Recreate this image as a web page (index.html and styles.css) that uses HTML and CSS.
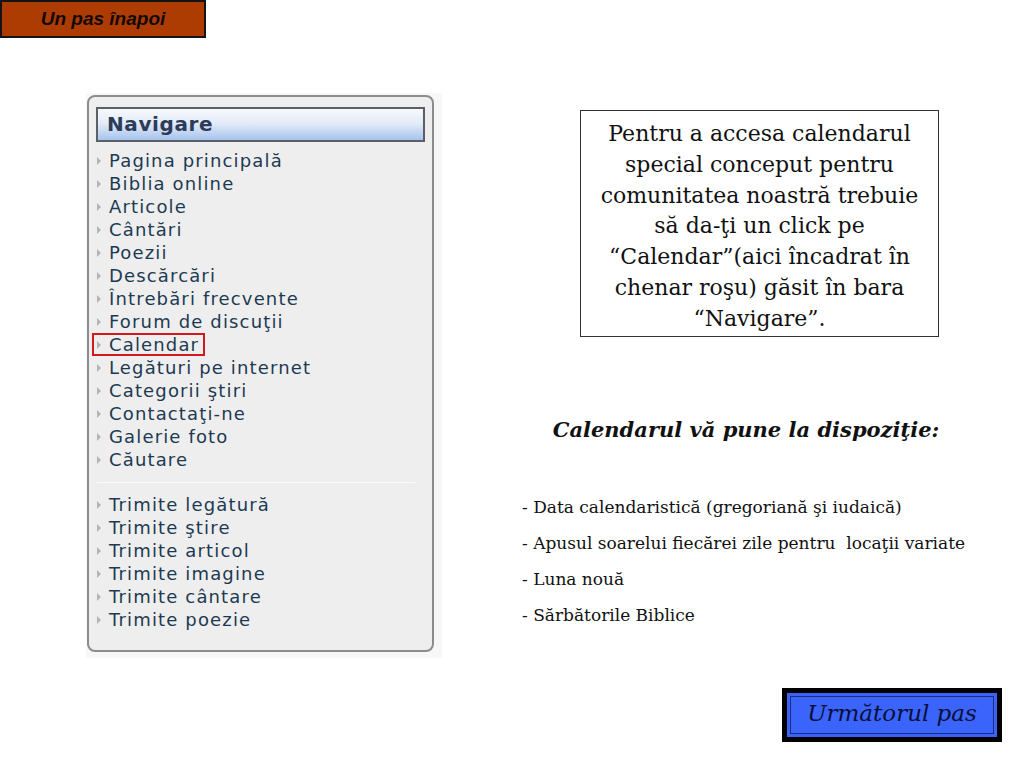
FILE: index.html
```html
<!DOCTYPE html>
<html lang="ro">
<head>
  <meta charset="utf-8">
  <title>Calendar</title>
  <link rel="stylesheet" href="styles.css">
</head>
<body>
  <div class="slide">
    <a class="back" href="#">Un pas înapoi</a>
    <div class="main">
      <div class="shot">
        <div class="nav">
          <div class="nav-title">Navigare</div>
          <ul class="nav-list">
            <li>Pagina principală</li>
            <li>Biblia online</li>
            <li>Articole</li>
            <li>Cântări</li>
            <li>Poezii</li>
            <li>Descărcări</li>
            <li>Întrebări frecvente</li>
            <li>Forum de discuţii</li>
            <li class="marked">Calendar</li>
            <li>Legături pe internet</li>
            <li>Categorii ştiri</li>
            <li>Contactaţi-ne</li>
            <li>Galerie foto</li>
            <li>Căutare</li>
          </ul>
          <hr class="nav-sep">
          <ul class="nav-list">
            <li>Trimite legătură</li>
            <li>Trimite ştire</li>
            <li>Trimite articol</li>
            <li>Trimite imagine</li>
            <li>Trimite cântare</li>
            <li>Trimite poezie</li>
          </ul>
        </div>
      </div>
      <div class="info">
        <p class="note">Pentru a accesa calendarul<br>special conceput pentru<br>comunitatea noastră trebuie<br>să da-ţi un click pe<br>“Calendar”(aici încadrat în<br>chenar roşu) găsit în bara<br>“Navigare”.</p>
        <h2>Calendarul vă pune la dispoziţie:</h2>
        <ul class="features">
          <li>- Data calendaristică (gregoriană şi iudaică)</li>
          <li>- Apusul soarelui fiecărei zile pentru &nbsp;locaţii variate</li>
          <li>- Luna nouă</li>
          <li>- Sărbătorile Biblice</li>
        </ul>
      </div>
    </div>
    <div class="footer">
      <a class="next" href="#"><span>Următorul pas</span></a>
    </div>
  </div>
</body>
</html>
```

FILE: styles.css
```css
body {
  margin: 0;
  background: #fff;
  font-family: "DejaVu Serif", serif;
}
.slide {
  width: 1024px;
  height: 768px;
  overflow: hidden;
}
.back {
  display: block;
  width: 202px;
  height: 34px;
  border: 2px solid #141414;
  background: #ad3c03;
  color: #150904;
  font: italic bold 19px/34px "Liberation Sans", Arial, sans-serif;
  text-align: center;
  text-decoration: none;
}
.main {
  display: flex;
  margin-top: 55px;
  padding-left: 86px;
}
.shot {
  width: 356px;
  height: 565px;
  background: #f7f7f7;
  padding: 2px 0 0 1px;
  box-sizing: border-box;
}
.nav {
  width: 347px;
  height: 557px;
  border: 2px solid #8c8c8c;
  border-radius: 8px;
  background: #eeeeee;
  box-sizing: border-box;
  padding-top: 10px;
  font-family: "DejaVu Sans", Verdana, sans-serif;
}
.nav-title {
  margin-left: 7px;
  width: 329px;
  height: 35px;
  box-sizing: border-box;
  border: 2px solid #5c6066;
  background: linear-gradient(#f6f8fc, #e4ecf8 45%, #a6c4ee);
  color: #2c3c58;
  font-weight: bold;
  font-size: 20px;
  letter-spacing: 0.6px;
  line-height: 30px;
  padding-left: 9px;
}
.nav-list {
  list-style: none;
  margin: 7px 0 0;
  padding: 0;
}
.nav-list li {
  width: fit-content;
  margin-left: 3px;
  padding: 0 3px 0 5px;
  height: 23px;
  line-height: 23px;
  font-size: 18px;
  letter-spacing: 1.15px;
  color: #1d3a52;
  display: flex;
  align-items: center;
  gap: 8px;
  box-sizing: border-box;
}
.nav-list li::before {
  content: "";
  border-left: 4px solid #b4b4b4;
  border-top: 4px solid transparent;
  border-bottom: 4px solid transparent;
}
.nav-list li.marked {
  padding-right: 6px;
  outline: 2px solid #d3181e;
  outline-offset: -2px;
}
.nav-sep {
  margin: 11px 17px 10px 8px;
  border: 0;
  height: 1px;
  background: #fbfbfb;
}
.info {
  width: 448px;
  margin-left: 80px;
  padding-top: 17px;
}
.note {
  margin: 0 0 0 58px;
  width: 359px;
  height: 227px;
  box-sizing: border-box;
  border: 1px solid #333;
  padding: 8px 0 0;
  text-align: center;
  font-size: 22px;
  line-height: 30.8px;
  color: #111;
  white-space: nowrap;
}
.info h2 {
  margin: 80px 0 0;
  text-align: center;
  font-size: 21px;
  line-height: 26px;
  font-style: italic;
  font-weight: bold;
  color: #111;
  white-space: nowrap;
}
.features {
  list-style: none;
  margin: 46px 0 0;
  padding: 0;
  font-size: 17px;
  line-height: 36px;
  color: #111;
  white-space: nowrap;
}
.footer {
  display: flex;
  justify-content: flex-end;
  padding-right: 22px;
  margin-top: 30px;
}
.next {
  display: block;
  width: 220px;
  height: 54px;
  box-sizing: border-box;
  background: #000;
  padding: 5px;
  text-decoration: none;
}
.next span {
  display: block;
  height: 100%;
  box-sizing: border-box;
  border: 3px solid #3b62f6;
  outline: 1px solid #1b2d80;
  outline-offset: -4px;
  background: #3a64fb;
  color: #0a0f3a;
  font-style: italic;
  font-size: 23px;
  line-height: 34px;
  text-align: center;
}
```
